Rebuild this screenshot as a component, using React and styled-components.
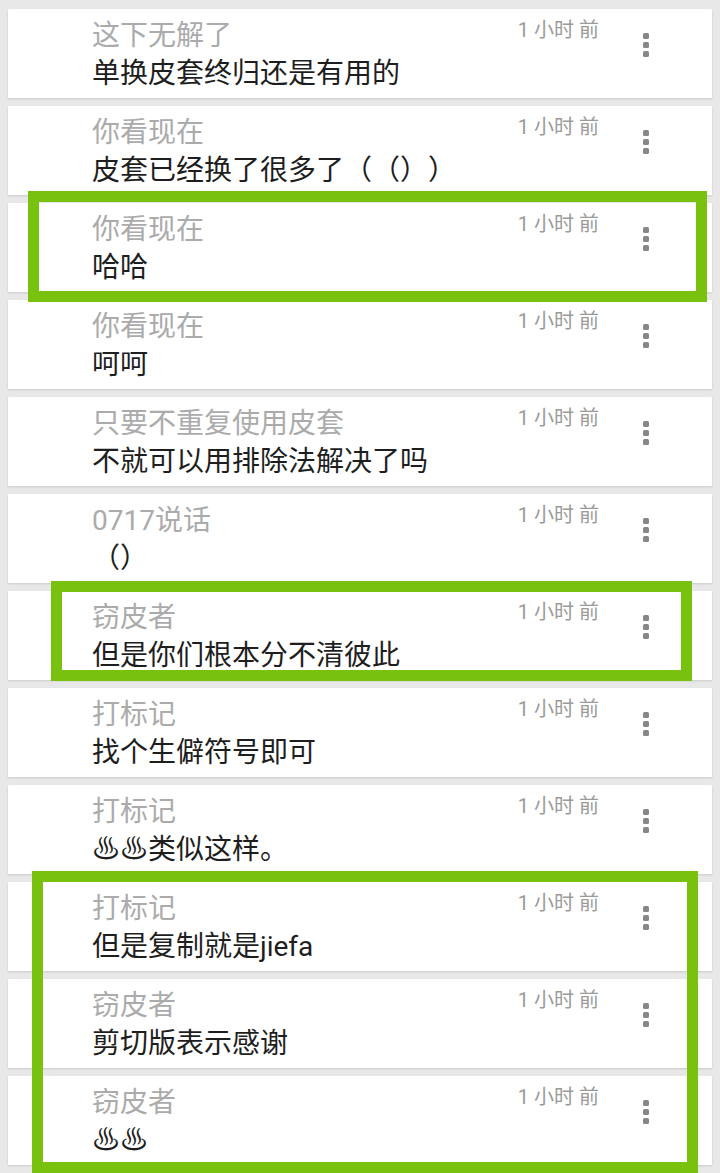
import styled, { createGlobalStyle } from "styled-components";

const GlobalStyle = createGlobalStyle`
  html, body {
    margin: 0;
    padding: 0;
    background: #e8e8e8;
  }
  body {
    font-family: Roboto, "Noto Sans CJK SC", "DejaVu Sans", sans-serif;
    overflow: hidden;
    text-spacing-trim: space-all;
  }
`;

const Page = styled.div`
  position: relative;
  width: 720px;
  height: 1173px;
  overflow: hidden;
  background: #e8e8e8;
`;

const List = styled.ol`
  list-style: none;
  margin: 0;
  padding: 9px 8px 0;
  display: flex;
  flex-direction: column;
  gap: 8px;
`;

const Card = styled.li`
  display: flex;
  align-items: flex-start;
  height: 89px;
  background: #fff;
  box-shadow: 0 1px 2px rgba(0, 0, 0, 0.13);
  box-sizing: border-box;
`;

const Body = styled.div`
  flex: 1;
  min-width: 0;
  padding: 8px 0 0 84px;
`;

const Name = styled.div`
  font-size: 28px;
  line-height: 38px;
  color: #ababab;
  white-space: nowrap;
`;

const Message = styled.div`
  font-size: 28px;
  line-height: 38px;
  color: #1e1e1e;
  white-space: nowrap;
  text-spacing-trim: space-all;
  font-feature-settings: "chws" 0, "halt" 0;
`;

const Time = styled.div`
  margin-top: 9px;
  font-size: 20px;
  line-height: 24px;
  color: #9a9a9a;
  white-space: nowrap;
`;

const Menu = styled.button`
  display: flex;
  flex-direction: column;
  gap: 3px;
  width: 6px;
  margin: 24px 63px 0 44px;
  padding: 0;
  border: none;
  background: none;
  > span {
    width: 6px;
    height: 6px;
    border-radius: 1.5px;
    background: #878787;
  }
`;

const Highlight = styled.div`
  position: absolute;
  box-sizing: border-box;
  border: 11px solid #79c10f;
  pointer-events: none;
`;

const comments = [
  { name: "这下无解了", text: "单换皮套终归还是有用的" },
  { name: "你看现在", text: "皮套已经换了很多了（（））" },
  { name: "你看现在", text: "哈哈" },
  { name: "你看现在", text: "呵呵" },
  { name: "只要不重复使用皮套", text: "不就可以用排除法解决了吗" },
  { name: "0717说话", text: "（）" },
  { name: "窃皮者", text: "但是你们根本分不清彼此" },
  { name: "打标记", text: "找个生僻符号即可" },
  { name: "打标记", text: "♨♨类似这样。" },
  { name: "打标记", text: "但是复制就是jiefa" },
  { name: "窃皮者", text: "剪切版表示感谢" },
  { name: "窃皮者", text: "♨♨" },
];

const highlights = [
  { left: 28, top: 191, width: 679, height: 111 },
  { left: 51, top: 581, width: 641, height: 100 },
  { left: 32, top: 871, width: 666, height: 302 },
];

export default function App() {
  return (
    <Page>
      <GlobalStyle />
      <List>
        {comments.map((c, i) => (
          <Card key={i}>
            <Body>
              <Name>{c.name}</Name>
              <Message>{c.text}</Message>
            </Body>
            <Time>1 小时 前</Time>
            <Menu aria-label="more">
              <span />
              <span />
              <span />
            </Menu>
          </Card>
        ))}
      </List>
      {highlights.map((h, i) => (
        <Highlight key={i} style={h} />
      ))}
    </Page>
  );
}
